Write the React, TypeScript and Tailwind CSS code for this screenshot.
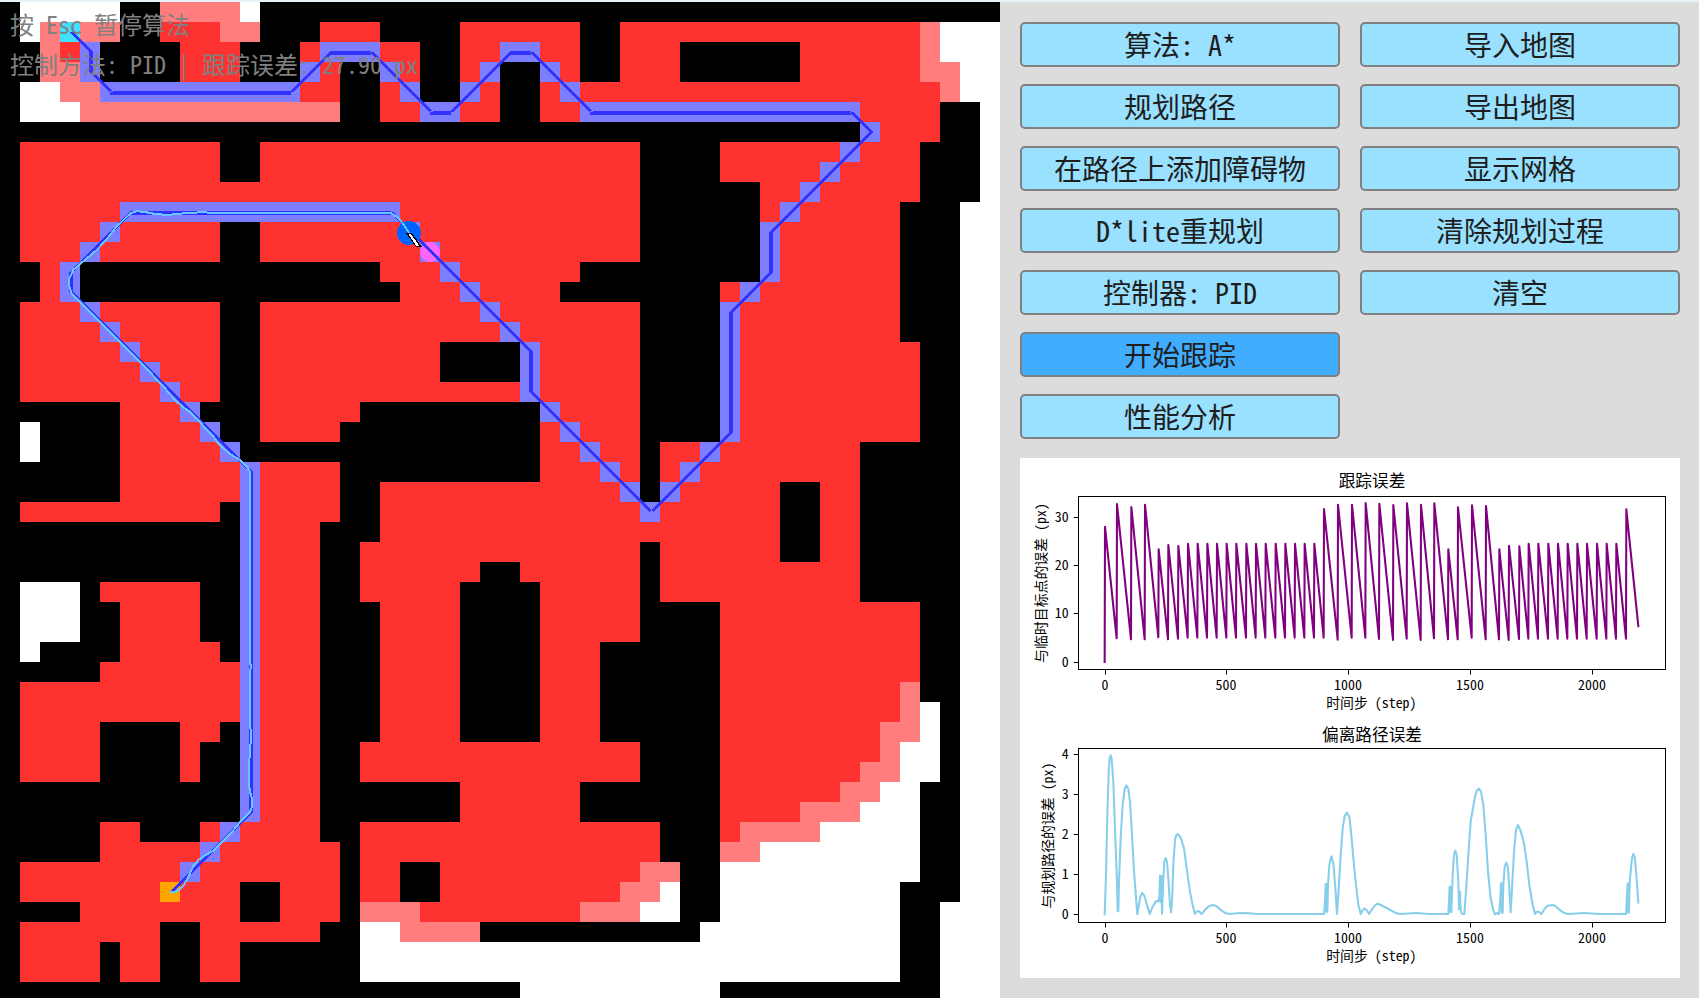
const FONT = "font-['Noto_Sans_Mono_CJK_SC','Noto_Sans_CJK_SC',monospace]";

const CELL = 20;

// One row per entry; each run is a cell kind followed by the column where the run ends.
// k wall, w free, r closed, p frontier, b path, s goal, o start
const ROWS = [
  "k1 w6 k8 p12 w13 k50",
  "k1 w2 p3 s4 p6 k8 r11 p13 k16 r19 k23 r29 k31 r46 p47 w50",
  "k2 p3 r4 b5 k9 r12 k15 r16 b19 r21 k23 r25 b27 r29 k31 r34 k40 r46 p47 w50",
  "k2 p4 b5 k9 r12 k15 b16 r17 k19 b20 r21 k23 r24 b25 k27 b28 r29 k31 r34 k40 r46 p48 w50",
  "k1 w3 p5 b15 r17 k19 r20 b21 k23 b24 r25 k27 r28 b29 r47 p48 w50",
  "k1 w4 p17 k19 r21 b23 r25 k27 r29 b43 r47 k49 w50",
  "k43 b44 r47 k49 w50",
  "k1 r11 k13 r32 k36 r42 b43 r46 k49 w50",
  "k1 r11 k13 r32 k36 r41 b42 r46 k49 w50",
  "k1 r32 k38 r40 b41 r46 k49 w50",
  "k1 r6 b20 r32 k38 r39 b40 r45 k48 w50",
  "k1 r5 b6 r11 k13 r20 b21 r32 k38 b39 r45 k48 w50",
  "k1 r4 b5 r11 k13 r21 b22 r32 k38 b39 r45 k48 w50",
  "k2 r3 b4 k19 r22 b23 r29 k38 b39 r45 k48 w50",
  "k2 r3 b4 k20 r23 b24 r28 k36 r37 b38 r45 k48 w50",
  "k1 r4 b5 r11 k13 r24 b25 r32 k36 b37 r45 k48 w50",
  "k1 r5 b6 r11 k13 r25 b26 r32 k36 b37 r45 k48 w50",
  "k1 r6 b7 r11 k13 r22 k26 b27 r32 k36 b37 r46 k48 w50",
  "k1 r7 b8 r11 k13 r22 k26 b27 r32 k36 b37 r46 k48 w50",
  "k1 r8 b9 r11 k13 r26 b27 r32 k36 b37 r46 k48 w50",
  "k6 r9 b10 k13 r18 k27 b28 r32 k36 b37 r46 k48 w50",
  "k1 w2 k6 r10 b11 k13 r17 k27 r28 b29 r32 k36 b37 r46 k48 w50",
  "k1 w2 k6 r11 b12 k27 r29 b30 r32 k33 r35 b36 r43 k48 w50",
  "k6 r12 b13 r17 k27 r30 b31 r32 k33 r34 b35 r43 k48 w50",
  "k6 r12 b13 r17 k19 r31 b32 k33 b34 r39 k41 r43 k48 w50",
  "k1 r11 k12 b13 r17 k19 r32 b33 r39 k41 r43 k48 w50",
  "k12 b13 r16 k19 r39 k41 r43 k48 w50",
  "k12 b13 r16 k18 r32 k33 r39 k41 r43 k48 w50",
  "k12 b13 r16 k18 r24 k26 r32 k33 r43 k48 w50",
  "k1 w4 k5 r10 k12 b13 r16 k18 r23 k27 r32 k33 r43 k48 w50",
  "k1 w4 k6 r10 k12 b13 r16 k19 r23 k27 r32 k36 r46 k48 w50",
  "k1 w4 k6 r10 k12 b13 r16 k19 r23 k27 r32 k36 r46 k48 w50",
  "k1 w2 k6 r11 k12 b13 r16 k19 r23 k27 r30 k36 r46 k48 w50",
  "k5 r12 b13 r16 k19 r23 k27 r30 k36 r46 k48 w50",
  "k1 r12 b13 r16 k19 r23 k27 r30 k36 r45 p46 k48 w50",
  "k1 r12 b13 r16 k19 r23 k27 r30 k36 r45 p46 w47 k48 w50",
  "k1 r5 k9 r11 k12 b13 r16 k19 r23 k27 r30 k36 r44 p46 w47 k48 w50",
  "k1 r5 k9 r10 k12 b13 r16 k18 r32 k36 r44 p45 w47 k48 w50",
  "k1 r5 k9 r10 k12 b13 r16 k18 r32 k36 r43 p45 w47 k48 w50",
  "k12 b13 r16 k23 r29 k36 r42 p44 w46 k48 w50",
  "k12 b13 r16 k23 r29 k36 r40 p43 w46 k48 w50",
  "k5 r7 k10 r11 b12 r16 k18 r33 k36 r37 p41 w46 k48 w50",
  "k5 r10 b11 r17 k18 r33 k36 p38 w46 k48 w50",
  "k1 r9 b10 r17 k18 r20 k22 r32 p34 k36 w46 k48 w50",
  "k1 r8 o9 r12 k14 r17 k18 r20 k22 r31 p33 w34 k36 w45 k48 w50",
  "k4 r12 k14 r17 k18 p21 r29 p32 w34 k36 w45 k47 w50",
  "k1 r8 k10 r16 k18 w20 p24 k35 w45 k47 w50",
  "k1 r5 k6 r8 k10 r12 k18 w45 k47 w50",
  "k1 r5 k6 r8 k10 r12 k18 w45 k47 w50",
  "k26 w36 k47 w50",
];

const FILL: Record<string, string> = {
  k: "#000000",
  w: "#ffffff",
  r: "#ff3232",
  p: "#ff7d7d",
  b: "#7d7dff",
  s: "#40e0ff",
  o: "#ffa500",
};

// Corner cells of the planned path, as [column, row].
const PATH: [number, number][] = [
  [3, 1], [4, 2], [4, 3], [5, 4], [14, 4], [16, 2], [18, 2], [21, 5], [22, 5], [25, 2], [26, 2],
  [29, 5], [42, 5], [43, 6], [38, 11], [38, 13], [36, 15], [36, 21], [32, 25], [26, 19], [26, 17],
  [20, 11], [19, 10], [6, 10], [3, 13], [3, 14], [12, 23], [12, 40], [8, 44],
];

function segment([c0, r0]: [number, number], [c1, r1]: [number, number]) {
  const x0 = c0 * CELL + 10;
  const y0 = r0 * CELL + 12;
  const x1 = c1 * CELL + 10;
  const y1 = r1 * CELL + 12;
  return y0 === y1
    ? `M${Math.min(x0, x1)} ${y0 - 1}H${Math.max(x0, x1) + 1}V${y0 + 3}H${Math.min(x0, x1)}Z`
    : `M${x0 - 1} ${y0}L${x1 - 1} ${y1}H${x1 + 3}L${x0 + 3} ${y0}Z`;
}

// Driven trajectory, in thirds of a pixel.
const TRAJECTORY = [
  [510, 2677], [522, 2677], [540, 2668], [552, 2655], [560, 2640], [570, 2620], [580, 2598],
  [595, 2580], [612, 2568], [640, 2552], [660, 2532], [690, 2503], [720, 2467], [750, 2435],
  [756, 2420], [756, 2395], [750, 2375], [746, 2350], [746, 2280], [750, 2270], [752, 2220],
  [752, 2190], [750, 2180], [750, 2010], [753, 2003], [753, 1996], [750, 1990], [750, 1416],
  [741, 1400], [720, 1380], [690, 1362], [662, 1338], [647, 1320], [640, 1308], [620, 1290],
  [600, 1266], [575, 1240], [545, 1218], [520, 1195], [497, 1167], [480, 1148], [470, 1138],
  [415, 1080], [326, 992], [215, 880], [208, 860], [208, 835], [220, 810], [245, 788], [290, 750],
  [320, 718], [345, 685], [390, 641], [410, 634], [430, 635], [460, 641], [490, 644], [510, 644],
  [550, 640], [600, 637], [640, 638], [1170, 638], [1190, 650], [1210, 672], [1228, 700],
];

const toPoints = (list: number[][], scale = 1) =>
  list.map(([x, y]) => `${(x * scale).toFixed(2)},${(y * scale).toFixed(2)}`).join(" ");

function MapView() {
  return (
    <div className="relative h-[996px] w-[1000px] shrink-0 overflow-hidden bg-white">
      <svg className="block" width={1000} height={996} viewBox="0 2 1000 996">
        <g shapeRendering="crispEdges">
          {ROWS.map((row, r) => {
            let from = 0;
            return row.split(" ").map((run) => {
              const to = Number(run.slice(1));
              const x = from;
              from = to;
              return (
                <rect
                  key={`${r}-${x}`}
                  x={x * CELL}
                  y={2 + r * CELL}
                  width={(to - x) * CELL}
                  height={CELL}
                  fill={FILL[run[0]]}
                />
              );
            });
          })}
          <circle cx={430} cy={252} r={10} fill="#ff64ff" />
          <path d={PATH.slice(1).map((p, i) => segment(PATH[i], p)).join("")} fill="#3232ff" />
          <circle cx={409} cy={233} r={12} fill="#0064ff" />
          <polyline points={toPoints(TRAJECTORY, 1 / 3)} fill="none" stroke="#64c8ff" strokeWidth={2} />
          <path d="M406 233h6l10 14h-6z" fill="#000" />
          <path d="M408.5 234h2.5l8.5 12h-3z" fill="#fff" />
        </g>
      </svg>
      <div
        className={`absolute top-[2px] left-[10px] text-[24px] leading-[40px] whitespace-pre text-[#808080] ${FONT}`}
      >
        <p>按 Esc 暂停算法</p>
        <p>控制方法: PID | 跟踪误差: 27.90 px</p>
      </div>
    </div>
  );
}

function PanelButton({ label, active = false }: { label: string; active?: boolean }) {
  return (
    <button
      className={`flex h-[45px] w-full items-center justify-center rounded-[5px] border-2 border-[#808080] pb-[2px] text-[28px] leading-none whitespace-pre text-[#1e1e1e] ${FONT} ${
        active ? "bg-[#40adff]" : "bg-[#99e1ff]"
      }`}
    >
      {label}
    </button>
  );
}

// Error against the temporary target: [x, peak y, y just before the peak], in thirds of a pixel.
const steady = (xs: number[], floor: number) => xs.map((x) => [x, 281, floor]);
const PEAKS = [
  [255, 230, 636], [291, 162, 565], [334, 171, 568], [375, 164, 568], [416, 298, 562], [445, 285, 568],
  [475, 288, 566],
  ...steady([504, 533, 562, 591, 620, 649, 679, 708, 737, 767, 796, 825, 854, 883], 563),
  [912, 177, 563], [954, 164, 569], [996, 164, 563], [1037, 159, 563], [1078, 161, 567], [1120, 165, 570],
  [1161, 160, 566], [1203, 164, 570], [1243, 160, 565], [1285, 298, 568], [1314, 172, 568],
  [1356, 166, 563], [1398, 168, 568], [1438, 298, 568], [1467, 287, 570], [1498, 289, 567],
  ...steady([1526, 1555, 1585, 1614, 1643, 1672, 1701, 1731, 1760, 1789], 566),
  [1819, 178, 566],
];
const TRACKING = [...PEAKS.flatMap(([x, top, low]) => [[x - 1, low], [x, top]]), [1855, 528]];

const DEVIATION = [
  [254, 598], [258, 480], [262, 300], [266, 170], [269, 128], [272, 121], [275, 132], [280, 200],
  [286, 370], [291, 500], [293, 588], [295, 588], [297, 500], [302, 370], [308, 270], [314, 222],
  [319, 211], [325, 222], [330, 260], [335, 340], [342, 470], [349, 560], [352, 598], [356, 575],
  [361, 545], [367, 534], [373, 542], [381, 570], [389, 597], [398, 575], [406, 561], [411, 558],
  [416, 559], [418, 545], [420, 482], [422, 560], [424, 482], [426, 596], [430, 490], [433, 440],
  [437, 429], [441, 440], [445, 490], [450, 570], [453, 592], [456, 560], [460, 450], [465, 375],
  [469, 360], [473, 357], [482, 368], [492, 400], [500, 460], [510, 530], [518, 570], [525, 597],
  [530, 590], [536, 588], [545, 597], [556, 583], [568, 573], [580, 570], [590, 574], [605, 587],
  [618, 595], [630, 597], [650, 595], [675, 594], [715, 597], [912, 597], [915, 560], [917, 507],
  [919, 590], [920, 507], [922, 590], [924, 510], [928, 450], [934, 424], [940, 445], [946, 520],
  [951, 597], [956, 520], [962, 420], [968, 340], [974, 303], [981, 293], [988, 305], [994, 360],
  [1000, 430], [1008, 510], [1015, 570], [1022, 597], [1028, 585], [1033, 581], [1040, 585],
  [1047, 597], [1057, 582], [1066, 570], [1073, 566], [1082, 570], [1100, 579], [1120, 590],
  [1130, 595], [1140, 597], [1190, 594], [1225, 597], [1285, 597], [1289, 515], [1291, 590],
  [1292, 515], [1294, 592], [1298, 480], [1302, 420], [1306, 407], [1310, 420], [1315, 500],
  [1317, 582], [1320, 530], [1322, 585], [1325, 596], [1333, 597], [1338, 530], [1345, 420],
  [1352, 320], [1358, 285], [1365, 245], [1371, 226], [1377, 221], [1383, 230], [1390, 270],
  [1397, 360], [1404, 470], [1412, 550], [1420, 585], [1425, 598], [1430, 594], [1437, 597],
  [1441, 550], [1443, 505], [1445, 593], [1446, 505], [1448, 593], [1450, 510], [1454, 455],
  [1459, 443], [1464, 460], [1469, 540], [1472, 592], [1476, 520], [1482, 410], [1488, 345],
  [1494, 330], [1502, 348], [1512, 385], [1520, 440], [1528, 510], [1538, 570], [1545, 597],
  [1550, 590], [1557, 590], [1564, 597], [1575, 580], [1583, 572], [1597, 570], [1605, 572],
  [1617, 583], [1630, 593], [1645, 597], [1690, 594], [1740, 597], [1818, 597], [1823, 505],
  [1825, 593], [1827, 593], [1829, 505], [1832, 470], [1836, 430], [1840, 417], [1844, 425],
  [1849, 480], [1855, 563],
];

const X_TICKS: [number, string][] = [
  [256, "0"], [619, "500"], [985, "1000"], [1351, "1500"], [1717, "2000"],
];

type ChartProps = {
  originY: number;
  title: string;
  titleY: number;
  yLabel: string;
  yLabelX: number;
  top: number;
  bottom: number;
  yTicks: [number, string][];
  data: number[][];
  color: string;
};

function Chart({ originY, title, titleY, yLabel, yLabelX, top, bottom, yTicks, data, color }: ChartProps) {
  const middle = (top + bottom) / 2;
  return (
    <svg
      className={`block text-[41.7px] ${FONT}`}
      width={660}
      height={260}
      viewBox={`0 ${originY} 1980 780`}
      fill="#000"
    >
      <text x={1056} y={titleY} textAnchor="middle" className="text-[50px]">
        {title}
      </text>
      <text transform={`translate(${yLabelX} ${middle}) rotate(-90)`} textAnchor="middle">
        {yLabel}
      </text>
      <text x={1054} y={bottom + 116} textAnchor="middle">
        时间步 (step)
      </text>
      <polyline
        points={toPoints(data)}
        fill="none"
        stroke={color}
        strokeWidth={6.2}
        strokeLinejoin="round"
        strokeLinecap="square"
      />
      <rect x={175.5} y={top} width={1761} height={bottom - top} fill="none" stroke="#000" strokeWidth={3} />
      {X_TICKS.map(([x, label]) => (
        <g key={label}>
          <path d={`M${x + 0.5} ${bottom}v15`} stroke="#000" strokeWidth={3} />
          <text x={x - 1} y={bottom + 62} textAnchor="middle">
            {label}
          </text>
        </g>
      ))}
      {yTicks.map(([y, label]) => (
        <g key={label}>
          <path d={`M175 ${y}h-14`} stroke="#000" strokeWidth={3} />
          <text x={146} y={y + 14} textAnchor="end">
            {label}
          </text>
        </g>
      ))}
    </svg>
  );
}

const LEFT = ["算法: A*", "规划路径", "在路径上添加障碍物", "D*lite重规划", "控制器: PID", "开始跟踪", "性能分析"];
const RIGHT = ["导入地图", "导出地图", "显示网格", "清除规划过程", "清空"];

export default function App() {
  return (
    <div className="h-[998px] w-[1699px] overflow-hidden bg-[#e9f2f6] pt-[2px]">
      <div className="flex h-[996px]">
        <MapView />
        <aside className="flex flex-1 flex-col bg-[#dcdcdc] pt-5 pr-[19px] pl-5">
          <div className="grid grid-cols-2 gap-x-5">
            <div className="flex flex-col gap-[17px]">
              {LEFT.map((label) => (
                <PanelButton key={label} label={label} active={label === "开始跟踪"} />
              ))}
            </div>
            <div className="flex flex-col gap-[17px]">
              {RIGHT.map((label) => (
                <PanelButton key={label} label={label} />
              ))}
            </div>
          </div>
          <div className="mt-[19px] h-[520px] bg-white">
            <Chart
              originY={24}
              title="跟踪误差"
              titleY={112}
              yLabel="与临时目标点的误差 (px)"
              yLabelX={79}
              top={139.5}
              bottom={658.5}
              yTicks={[[202.5, "30"], [346.5, "20"], [490.5, "10"], [637.5, "0"]]}
              data={TRACKING}
              color="#800080"
            />
            <Chart
              originY={9}
              title="偏离路径误差"
              titleY={77}
              yLabel="与规划路径的误差 (px)"
              yLabelX={99}
              top={100.5}
              bottom={622.5}
              yTicks={[[118.5, "4"], [238.5, "3"], [358.5, "2"], [478.5, "1"], [598.5, "0"]]}
              data={DEVIATION}
              color="#87ceeb"
            />
          </div>
        </aside>
      </div>
    </div>
  );
}
